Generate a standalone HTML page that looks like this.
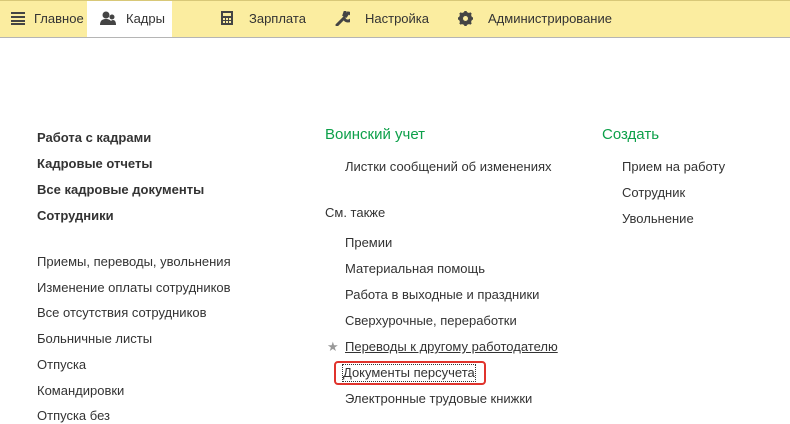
<!DOCTYPE html>
<html><head><meta charset="utf-8"><style>
body{margin:0;width:790px;height:413px;overflow:hidden;background:#fff;font-family:"Liberation Sans",Arial,sans-serif;font-size:13px;color:#333;position:relative}
.bar{position:absolute;left:0;top:0;width:790px;height:36px;background:#fbeda0;border-top:1px solid #d8c878;border-bottom:1px solid #b5b5b5}
.tab{position:absolute;top:0;height:36px;line-height:36px;font-size:13px;color:#333}
.t{position:absolute;white-space:nowrap;line-height:16px}
.b{font-weight:bold}
.g{color:#0da04a;font-size:15px}
svg{position:absolute}
</style></head><body>
<div class="bar"></div>
<div style="position:absolute;left:87px;top:1px;width:85px;height:36px;background:#fff"></div>
<svg style="left:11px;top:12px" width="14" height="13"><g fill="#444"><rect y="0" width="14" height="2"/><rect y="4" width="14" height="2"/><rect y="8" width="14" height="2"/><rect y="11" width="14" height="2"/></g></svg>
<div class="tab" style="left:34px;top:1px">Главное</div>
<svg style="left:100px;top:11px" width="16" height="15"><g fill="#444"><circle cx="6" cy="4" r="3.5"/><path d="M0 14c0-5 3-6 6-6s6 1 6 6z"/><circle cx="12" cy="6" r="2.5"/><path d="M10 14c0-3 1-5 3-5s3 2 3 5z"/></g></svg>
<div class="tab" style="left:126px;top:1px">Кадры</div>
<svg style="left:221px;top:11px" width="12" height="14"><rect x="0" y="0" width="12" height="14" fill="#444"/><g fill="#fbeda0"><rect x="2" y="2" width="8" height="3"/><rect x="2" y="7" width="2" height="2"/><rect x="5" y="7" width="2" height="2"/><rect x="8" y="7" width="2" height="2"/><rect x="2" y="10" width="2" height="2"/><rect x="5" y="10" width="2" height="2"/><rect x="8" y="10" width="2" height="2"/></g></svg>
<div class="tab" style="left:249px;top:1px">Зарплата</div>
<svg style="left:335px;top:11px" width="15" height="15"><path d="M2 14l7-7M9 7a4 4 0 1 0 4-5l-2 3-2-1 1-3" stroke="#444" stroke-width="3" fill="none" stroke-linecap="round"/></svg>
<div class="tab" style="left:365px;top:1px">Настройка</div>
<svg style="left:458px;top:11px" width="15" height="15"><circle cx="7.5" cy="7.5" r="5" fill="none" stroke="#444" stroke-width="3"/><g stroke="#444" stroke-width="2.5"><path d="M7.5 0v15M0 7.5h15M2 2l11 11M13 2L2 13"/></g><circle cx="7.5" cy="7.5" r="2.5" fill="#fbeda0"/></svg>
<div class="tab" style="left:488px;top:1px">Администрирование</div>

<div class="t b" style="left:37px;top:130px">Работа с кадрами</div>
<div class="t b" style="left:37px;top:156px">Кадровые отчеты</div>
<div class="t b" style="left:37px;top:182px">Все кадровые документы</div>
<div class="t b" style="left:37px;top:208px">Сотрудники</div>
<div class="t" style="left:37px;top:254px">Приемы, переводы, увольнения</div>
<div class="t" style="left:37px;top:280px">Изменение оплаты сотрудников</div>
<div class="t" style="left:37px;top:305px">Все отсутствия сотрудников</div>
<div class="t" style="left:37px;top:331px">Больничные листы</div>
<div class="t" style="left:37px;top:357px">Отпуска</div>
<div class="t" style="left:37px;top:383px">Командировки</div>
<div class="t" style="left:37px;top:408px">Отпуска без</div>

<div class="t g" style="left:325px;top:127px">Воинский учет</div>
<div class="t" style="left:345px;top:159px">Листки сообщений об изменениях</div>
<div class="t" style="left:325px;top:205px">См. также</div>
<div class="t" style="left:345px;top:235px">Премии</div>
<div class="t" style="left:345px;top:261px">Материальная помощь</div>
<div class="t" style="left:345px;top:287px">Работа в выходные и праздники</div>
<div class="t" style="left:345px;top:313px">Сверхурочные, переработки</div>
<div class="t" style="left:327px;top:339px;color:#999">★</div>
<div class="t" style="left:345px;top:339px;text-decoration:underline">Переводы к другому работодателю</div>
<div style="position:absolute;left:334px;top:361px;width:152px;height:24px;border:2px solid #e0332c;border-radius:4px;box-sizing:border-box"></div>
<div class="t" style="left:343px;top:365px;outline:1px dotted #333">Документы персучета</div>
<div class="t" style="left:345px;top:391px">Электронные трудовые книжки</div>

<div class="t g" style="left:602px;top:127px">Создать</div>
<div class="t" style="left:622px;top:159px">Прием на работу</div>
<div class="t" style="left:622px;top:185px">Сотрудник</div>
<div class="t" style="left:622px;top:211px">Увольнение</div>
</body></html>
